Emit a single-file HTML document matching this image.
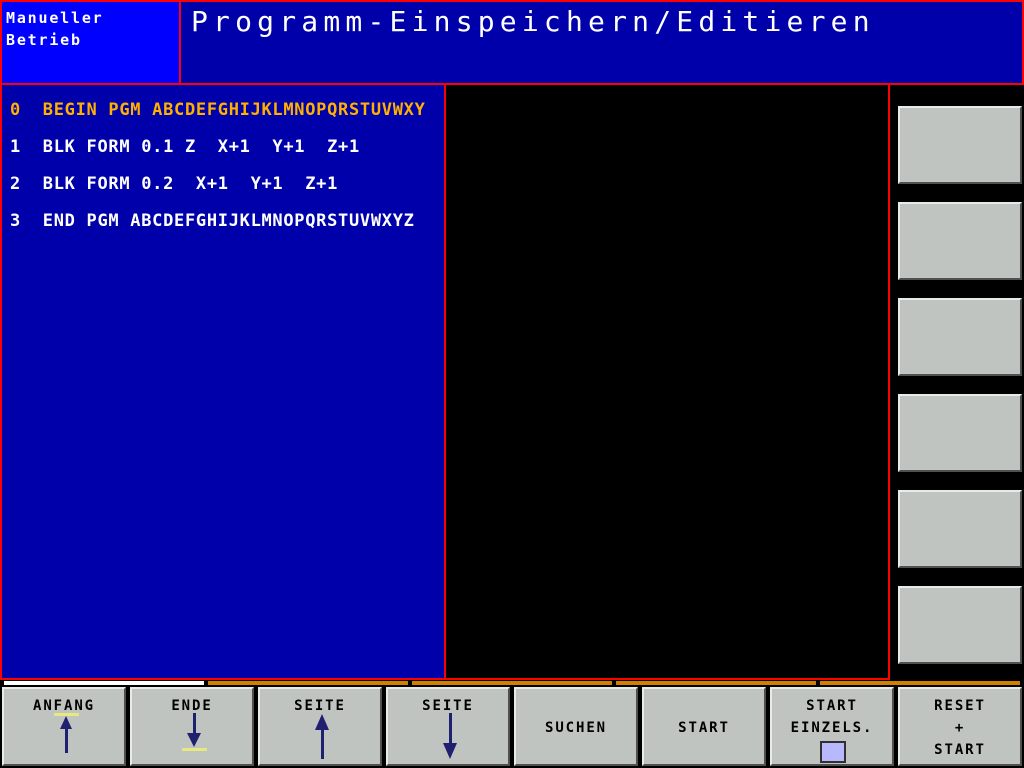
<!DOCTYPE html>
<html><head><meta charset="utf-8"><style>
*{margin:0;padding:0;box-sizing:border-box}
body{width:1024px;height:768px;background:#000;position:relative;overflow:hidden;font-family:"Liberation Mono","DejaVu Sans Mono",monospace}
.a{position:absolute}
.btn{position:absolute;background:#c0c4c0;border-top:2px solid #e8ece8;border-left:2px solid #e8ece8;border-right:2px solid #505050;border-bottom:2px solid #505050;color:#000;font-family:"DejaVu Sans Mono","Liberation Mono",monospace;font-size:14px;font-weight:bold;text-align:center;letter-spacing:1.9px}
.t{position:absolute;left:0;right:0;text-align:center}
.ln{position:absolute;left:10px;font-size:17px;font-weight:bold;white-space:pre;color:#fff;font-family:"DejaVu Sans Mono","Liberation Mono",monospace;letter-spacing:0.7px}
</style></head><body>
<div class="a" style="left:0;top:0;width:181px;height:85px;background:#0000ff;border:2px solid #f00"></div>
<div class="a" style="left:179px;top:0;width:845px;height:85px;background:#0000aa;border:2px solid #f00"></div>
<div class="a" style="left:6px;top:7px;color:#fff;font-size:15px;font-weight:bold;line-height:22px;letter-spacing:1.8px;font-family:'DejaVu Sans Mono',monospace">Manueller<br>Betrieb</div>
<div class="a" style="left:191px;top:5px;color:#fff;font-size:28px;letter-spacing:5.2px;font-family:'DejaVu Sans Mono',monospace">Programm-Einspeichern/Editieren</div>
<div class="a" style="left:0;top:83px;width:446px;height:597px;background:#0000aa;border:2px solid #f00"></div>
<div class="a" style="left:444px;top:83px;width:446px;height:597px;background:#000;border:2px solid #f00"></div>
<div class="a" style="left:890px;top:83px;width:134px;height:2px;background:#f00"></div>
<div class="ln" style="top:100px;color:#ffb000">0  BEGIN PGM ABCDEFGHIJKLMNOPQRSTUVWXY</div>
<div class="ln" style="top:137px">1  BLK FORM 0.1 Z  X+1  Y+1  Z+1</div>
<div class="ln" style="top:174px">2  BLK FORM 0.2  X+1  Y+1  Z+1</div>
<div class="ln" style="top:211px">3  END PGM ABCDEFGHIJKLMNOPQRSTUVWXYZ</div>
<div class="btn" style="left:898px;top:106px;width:124px;height:78px"></div>
<div class="btn" style="left:898px;top:202px;width:124px;height:78px"></div>
<div class="btn" style="left:898px;top:298px;width:124px;height:78px"></div>
<div class="btn" style="left:898px;top:394px;width:124px;height:78px"></div>
<div class="btn" style="left:898px;top:490px;width:124px;height:78px"></div>
<div class="btn" style="left:898px;top:586px;width:124px;height:78px"></div>
<div class="a" style="left:4px;top:681px;width:200px;height:4px;background:#fff"></div>
<div class="a" style="left:208px;top:681px;width:200px;height:4px;background:#d08000"></div>
<div class="a" style="left:412px;top:681px;width:200px;height:4px;background:#d08000"></div>
<div class="a" style="left:616px;top:681px;width:200px;height:4px;background:#d08000"></div>
<div class="a" style="left:820px;top:681px;width:200px;height:4px;background:#d08000"></div>

<div class="btn" style="left:2px;top:687px;width:124px;height:79px"><div class="t" style="top:9px">ANFANG</div>
<svg class="a" style="left:0;top:0" width="120" height="75"><rect x="50" y="24" width="25" height="3" fill="#e8e880"/><polygon points="62,27 56,40 68,40" fill="#202070"/><rect x="61" y="38" width="3" height="26" fill="#202070"/></svg></div>
<div class="btn" style="left:130px;top:687px;width:124px;height:79px"><div class="t" style="top:9px">ENDE</div>
<svg class="a" style="left:0;top:0" width="120" height="75"><rect x="61" y="24" width="3" height="22" fill="#202070"/><polygon points="55,44 69,44 62,58" fill="#202070"/><rect x="50" y="59" width="25" height="3" fill="#e8e880"/></svg></div>
<div class="btn" style="left:258px;top:687px;width:124px;height:79px"><div class="t" style="top:9px">SEITE</div>
<svg class="a" style="left:0;top:0" width="120" height="75"><polygon points="62,25 55,41 69,41" fill="#202070"/><rect x="61" y="39" width="3" height="31" fill="#202070"/></svg></div>
<div class="btn" style="left:386px;top:687px;width:124px;height:79px"><div class="t" style="top:9px">SEITE</div>
<svg class="a" style="left:0;top:0" width="120" height="75"><rect x="61" y="24" width="3" height="32" fill="#202070"/><polygon points="55,54 69,54 62,70" fill="#202070"/></svg></div>
<div class="btn" style="left:514px;top:687px;width:124px;height:79px"><div class="t" style="top:31px">SUCHEN</div></div>
<div class="btn" style="left:642px;top:687px;width:124px;height:79px"><div class="t" style="top:31px">START</div></div>
<div class="btn" style="left:770px;top:687px;width:124px;height:79px"><div class="t" style="top:9px">START</div><div class="t" style="top:31px">EINZELS.</div>
<div class="a" style="left:48px;top:52px;width:26px;height:22px;background:#b8b8ff;border:2px solid #303030"></div></div>
<div class="btn" style="left:898px;top:687px;width:124px;height:79px"><div class="t" style="top:9px">RESET</div><div class="t" style="top:31px">+</div><div class="t" style="top:53px">START</div></div>
</body></html>
